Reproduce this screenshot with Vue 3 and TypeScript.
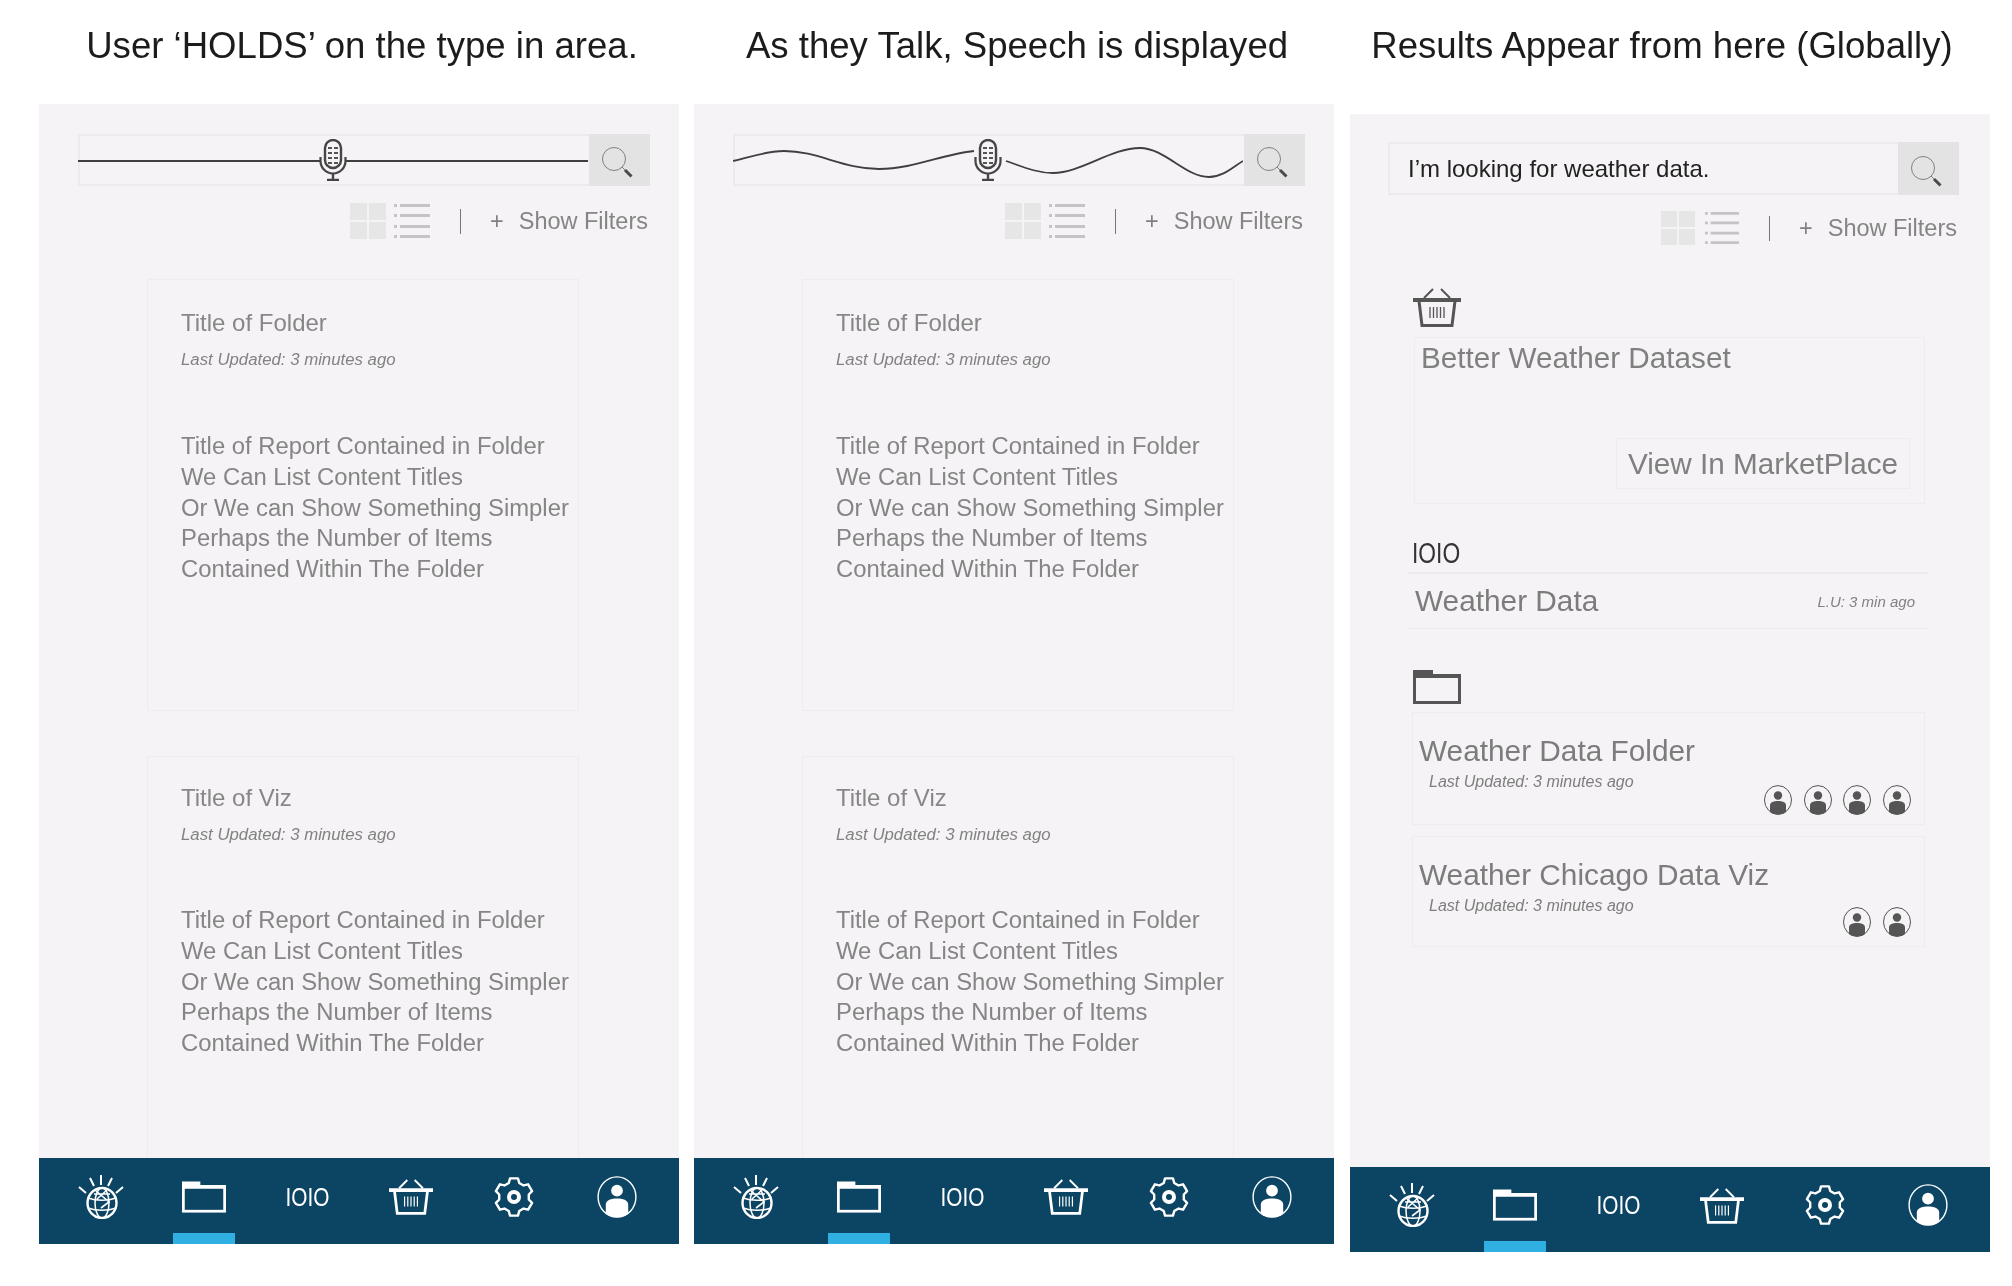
<script setup lang="ts">
const reportLines = [
  'Title of Report Contained in Folder',
  'We Can List Content Titles',
  'Or We can Show Something Simpler',
  'Perhaps the Number of Items',
  'Contained Within The Folder',
]

const cards = [
  { title: 'Title of Folder', kind: 'first' },
  { title: 'Title of Viz', kind: 'second' },
]

const talkPanels = [
  {
    heading: 'User ‘HOLDS’ on the type in area.',
    line: 'M0 27H242M268 27H510',
  },
  {
    heading: 'As they Talk, Speech is displayed',
    line: 'M0 27C20 22 35 17 51 17C85 17 110 35 146 35C180 35 210 20 241 17M273 27C288 32 303 39 320 39C348 39 378 14 407 14C432 14 452 43 476 43C490 43 500 33 510 27',
  },
]

const navIcons = ['i-globe', 'i-folder', 'text', 'i-basket', 'i-gear', 'i-user']

function makeGear(): string {
  const cx = 20
  const cy = 20
  const pts: string[] = []
  for (let i = 0; i < 6; i++) {
    const a = (Math.PI / 3) * i - Math.PI / 2
    const step = Math.PI / 3
    const list: Array<[number, number]> = [
      [a - step * 0.2, 19],
      [a + step * 0.2, 19],
      [a + step * 0.34, 15],
      [a + step * 0.66, 15],
    ]
    for (const [t, r] of list) {
      pts.push(`${(cx + r * Math.cos(t)).toFixed(2)} ${(cy + r * Math.sin(t)).toFixed(2)}`)
    }
  }
  return `M${pts.join('L')}Z`
}
const gearPath = makeGear()
</script>

<template>
  <div class="page">
    <svg class="defs" width="0" height="0" aria-hidden="true">
      <symbol id="i-search" viewBox="0 0 32 32">
        <circle cx="13" cy="13" r="11.5" fill="none" stroke="#808080" stroke-width="1" />
        <path d="M21 21L24 24" stroke="#808080" stroke-width="1" />
        <path d="M24 24L30.5 30.5" stroke="#4a4a4a" stroke-width="3" />
      </symbol>
      <symbol id="i-mic" viewBox="0 0 30 42">
        <rect x="7" y="1" width="16" height="28" rx="8" fill="none" stroke="#454545" stroke-width="2.4" />
        <path d="M10 9h4M16 9h4M10 14h4M16 14h4M10 19h4M16 19h4M10 24h4M16 24h4" stroke="#555" stroke-width="2" />
        <path d="M2.5 18v4a12.5 12.5 0 0 0 25 0v-4" fill="none" stroke="#454545" stroke-width="2.2" />
        <path d="M15 34v6M9 41h12" stroke="#454545" stroke-width="2.4" />
      </symbol>
      <symbol id="i-grid" viewBox="0 0 36 36">
        <path d="M0 0h17v17H0zM19 0h17v17H19zM0 19h17v17H0zM19 19h17v17H19z" fill="#e6e6e6" />
      </symbol>
      <symbol id="i-list" viewBox="0 0 36 36">
        <path d="M0 1h3v3H0zM6 1h30v3H6zM0 11h3v3H0zM6 11h30v3H6zM0 22h3v3H0zM6 22h30v3H6zM0 32h3v3H0zM6 32h30v3H6z" fill="#c4c4c4" />
      </symbol>
      <symbol id="i-globe" viewBox="0 0 46 44">
        <g fill="none" stroke="currentColor">
          <path d="M23 0v10M12 3l4 8M34 3l-4 8M1 12l7 6M45 12l-7 6" stroke-width="2" />
          <ellipse cx="24" cy="28" rx="14.5" ry="15" stroke-width="2.4" />
          <ellipse cx="24" cy="28" rx="7" ry="15" stroke-width="1.5" />
          <path d="M10 23c8 3 20 3 28 0M10 33c8 3 20 3 28 0M17 15l14 12-8 6M29 15l-10 9M16 19h16" stroke-width="1.6" />
        </g>
      </symbol>
      <symbol id="i-folder" viewBox="0 0 48 34">
        <rect x="1.5" y="5.5" width="45" height="27" fill="none" stroke="currentColor" stroke-width="3" />
        <path d="M0 0h20v4h28v4H0z" fill="currentColor" />
      </symbol>
      <symbol id="i-basket" viewBox="0 0 48 40">
        <path d="M11 11L20 2M37 11L28 2" fill="none" stroke="currentColor" stroke-width="2" />
        <path d="M0 11h48v4H0z" fill="currentColor" />
        <path d="M6 14L9 38.5H39L42 14" fill="none" stroke="currentColor" stroke-width="3" />
        <path d="M17 20v11M20.5 20v11M24 20v11M27.5 20v11M31 20v11" stroke="currentColor" stroke-width="1.3" />
      </symbol>
      <symbol id="i-gear" viewBox="0 0 40 40">
        <path :d="gearPath" fill="none" stroke="currentColor" stroke-width="2.4" stroke-linejoin="round" />
        <circle cx="20" cy="20" r="5" fill="none" stroke="currentColor" stroke-width="4" />
      </symbol>
      <symbol id="i-user" viewBox="0 0 30 30">
        <ellipse cx="15" cy="15" rx="13.5" ry="14.4" fill="none" stroke="currentColor" stroke-width="1" />
        <circle cx="15" cy="10.5" r="4.2" fill="currentColor" />
        <path d="M7 27V20.5C7 17 11 16 15 16C19 16 23 17 23 20.5V27C20 30.2 10 30.2 7 27Z" fill="currentColor" />
      </symbol>
    </svg>

    <section v-for="p in talkPanels" :key="p.heading" class="col">
      <h2 class="heading">{{ p.heading }}</h2>
      <div class="panel">
        <div class="main">
          <div class="bar">
            <div class="field">
              <svg class="wave" viewBox="0 0 510 52" width="510" height="52">
                <path :d="p.line" fill="none" stroke="#3f3f3f" stroke-width="1.8" />
                <use href="#i-mic" x="240" y="5" width="30" height="42" />
              </svg>
            </div>
            <button class="go"><svg width="32" height="32"><use href="#i-search" /></svg></button>
          </div>
          <div class="tools">
            <svg width="36" height="36"><use href="#i-grid" /></svg>
            <svg class="list" width="36" height="36"><use href="#i-list" /></svg>
            <span class="rule"></span>
            <span class="plus">+</span>
            <span class="filters">Show Filters</span>
          </div>
          <article v-for="c in cards" :key="c.title" class="card" :class="c.kind">
            <h3 class="card-title">{{ c.title }}</h3>
            <p class="updated">Last Updated: 3 minutes ago</p>
            <ul class="report">
              <li v-for="l in reportLines" :key="l">{{ l }}</li>
            </ul>
          </article>
        </div>
        <nav class="nav">
          <div v-for="n in navIcons" :key="n" class="nav-item" :class="{ active: n === 'i-folder' }">
            <span v-if="n === 'text'" class="nav-text">IOIO</span>
            <svg v-else :class="n"><use :href="'#' + n" /></svg>
          </div>
        </nav>
      </div>
    </section>

    <section class="col results">
      <h2 class="heading">Results Appear from here (Globally)</h2>
      <div class="panel">
        <div class="main">
          <div class="bar">
            <div class="field query">I’m looking for weather data.</div>
            <button class="go"><svg width="32" height="32"><use href="#i-search" /></svg></button>
          </div>
          <div class="tools">
            <svg width="34" height="36"><use href="#i-grid" /></svg>
            <svg class="list" width="34" height="36"><use href="#i-list" /></svg>
            <span class="rule"></span>
            <span class="plus">+</span>
            <span class="filters">Show Filters</span>
          </div>

          <svg class="type-icon basket" width="48" height="40"><use href="#i-basket" /></svg>
          <div class="market">
            <div class="market-title">Better Weather Dataset</div>
            <div class="market-btn">View In MarketPlace</div>
          </div>

          <div class="data">
            <div class="data-head"><span class="data-mark">IOIO</span></div>
            <div class="data-row">
              <span class="big">Weather Data</span>
              <span class="lu">L.U: 3 min ago</span>
            </div>
          </div>

          <svg class="type-icon folder" width="48" height="34"><use href="#i-folder" /></svg>
          <div class="hit">
            <div>
              <div class="big">Weather Data Folder</div>
              <div class="hit-sub">Last Updated: 3 minutes ago</div>
            </div>
            <div class="people">
              <svg v-for="i in 4" :key="i" width="30" height="30"><use href="#i-user" /></svg>
            </div>
          </div>
          <div class="hit second">
            <div>
              <div class="big">Weather Chicago Data Viz</div>
              <div class="hit-sub">Last Updated: 3 minutes ago</div>
            </div>
            <div class="people">
              <svg v-for="i in 2" :key="i" width="30" height="30"><use href="#i-user" /></svg>
            </div>
          </div>
        </div>
        <nav class="nav">
          <div v-for="n in navIcons" :key="n" class="nav-item" :class="{ active: n === 'i-folder' }">
            <span v-if="n === 'text'" class="nav-text">IOIO</span>
            <svg v-else :class="n"><use :href="'#' + n" /></svg>
          </div>
        </nav>
      </div>
    </section>
  </div>
</template>

<style>
html, body { background: #fff; }
</style>

<style scoped>
.page {
  display: flex;
  gap: 15px;
  width: 2012px;
  height: 1286px;
  box-sizing: border-box;
  padding-left: 39px;
  overflow: hidden;
  font-family: "Liberation Sans", Arial, sans-serif;
  color: #858585;
  filter: blur(0.6px);
}
.defs { position: absolute; }
.col { width: 640px; display: flex; flex-direction: column; }
.results { margin-left: 1px; }
.heading {
  height: 104px;
  margin: 0;
  padding: 25px 0 0 6px;
  box-sizing: border-box;
  font-size: 36.6px;
  line-height: 42px;
  font-weight: 400;
  color: #1c1c1c;
  text-align: center;
  white-space: nowrap;
}
.results .heading { height: 114px; padding-left: 0; margin-left: -16px; margin-right: 0; }
.panel {
  height: 1140px;
  display: flex;
  flex-direction: column;
  background: #f5f3f5;
}
.results .panel { height: 1138px; }
.main { flex: 1; min-height: 0; overflow: hidden; padding-top: 30px; }
.results .main { padding-top: 28px; }

.bar {
  display: flex;
  height: 52px;
  margin: 0 29px 0 39px;
  box-sizing: border-box;
  border: 2px solid #ebebeb;
  border-right: 0;
}
.results .bar { height: 53px; margin: 0 31px 0 38px; }
.field { flex: 1; position: relative; min-width: 0; }
.wave { position: absolute; left: -2px; top: -2px; }
.go {
  flex: none;
  width: 61px;
  margin: -2px 0;
  padding: 7px 0 0 12px;
  border: 0;
  background: #e3e3e3;
  text-align: left;
  display: block;
}
.query { padding-left: 18px; font-size: 24px; line-height: 49px; color: #222; }

.tools {
  display: flex;
  align-items: center;
  justify-content: flex-end;
  height: 36px;
  margin: 17px 31px 0 0;
}
.results .tools { margin: 15px 33px 0 0; }
.list { margin-left: 8px; }
.results .list { margin-left: 10px; }
.rule { width: 1px; height: 25px; margin: 0 0 0 30px; background: #777; }
.plus { margin-left: 29px; font-size: 23.5px; color: #808080; }
.filters { margin-left: 15px; font-size: 23.5px; color: #858585; }

.card {
  width: 432px;
  margin-left: 108px;
  box-sizing: border-box;
  border: 1px solid #eeeded;
  padding-left: 33px;
  padding-top: 28px;
}
.first { margin-top: 40px; height: 432px; }
.second { margin-top: 45px; height: 520px; padding-top: 26px; }
.card-title { margin: 0; font-size: 24px; line-height: 30px; font-weight: 400; color: #878787; }
.updated { margin: 12px 0 0; font-size: 16.8px; line-height: 20px; font-style: italic; color: #828282; }
.report { margin: 61px 0 0; padding: 0; list-style: none; font-size: 23.85px; line-height: 30.8px; color: #858585; white-space: nowrap; }
.second .report { margin-top: 60px; }

.nav {
  flex: none;
  height: 86px;
  display: grid;
  grid-template-columns: repeat(6, 1fr);
  padding: 0 10px;
  background: #0c4564;
  color: #fff;
}
.results .nav { height: 85px; }
.nav-item { position: relative; display: flex; align-items: center; justify-content: center; padding-bottom: 9px; }
.active::after {
  content: "";
  position: absolute;
  left: 21px;
  right: 21px;
  bottom: 0;
  height: 11px;
  background: #2fafe2;
}
.nav-text { display: inline-block; font-size: 26px; line-height: 32px; transform: scaleX(0.8); }
.i-globe { width: 46px; height: 44px; }
.i-folder { width: 44px; height: 32px; }
.i-basket { width: 44px; height: 37px; }
.i-gear { width: 40px; height: 40px; }
.i-user { width: 42px; height: 42px; }

.type-icon { display: block; color: #555; margin-left: 63px; }
.basket { margin-top: 41px; }
.folder { margin-top: 41px; }
.market {
  display: flex;
  flex-direction: column;
  justify-content: space-between;
  width: 511px;
  height: 167px;
  box-sizing: border-box;
  margin: 10px 0 0 64px;
  padding: 3px 14px 14px 6px;
  border: 1px solid #eeeded;
}
.market-title { font-size: 29.7px; line-height: 34px; color: #808080; }
.market-btn {
  align-self: flex-end;
  width: 294px;
  height: 51px;
  box-sizing: border-box;
  border: 1px solid #eeeded;
  font-size: 29.7px;
  line-height: 49px;
  text-align: center;
  color: #808080;
}
.data { width: 520px; margin: 34px 0 0 58px; }
.data-head {
  height: 36px;
  padding-left: 4px;
  font-size: 30px;
  line-height: 30px;
  color: #333;
  border-bottom: 2px solid #ebebeb;
  box-sizing: border-box;
}
.data-mark { display: inline-block; transform: scaleX(0.76); transform-origin: left center; }
.data-row {
  display: flex;
  justify-content: space-between;
  align-items: center;
  height: 55px;
  box-sizing: border-box;
  padding: 0 13px 0 7px;
  border-bottom: 1px solid #ebebeb;
}
.big { font-size: 29.8px; line-height: 34px; color: #7c7c7c; white-space: nowrap; }
.lu { font-size: 15px; font-style: italic; color: #828282; }
.hit {
  display: flex;
  justify-content: space-between;
  width: 513px;
  height: 113px;
  box-sizing: border-box;
  margin: 8px 0 0 62px;
  padding: 21px 12px 9px 6px;
  border: 1px solid #eeeded;
}
.hit.second { height: 111px; margin-top: 11px; }
.hit-sub { margin: 4px 0 0 10px; font-size: 16px; line-height: 20px; font-style: italic; color: #7e7e7e; }
.people { align-self: flex-end; display: flex; gap: 9.7px; color: #555; }
.people svg { display: block; }
</style>
